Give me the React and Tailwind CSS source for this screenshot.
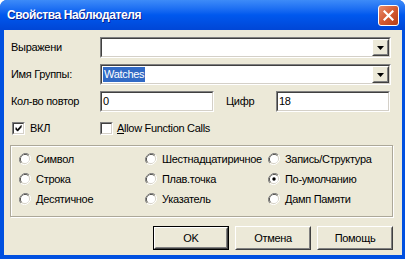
import React from 'react';

const font = { fontFamily: '"Liberation Sans", Arial, sans-serif' };

const Sunken = ({ className = '', children }) => (
  <div className={`border border-t-[#808080] border-l-[#808080] border-b-white border-r-white ${className}`}>
    <div className="h-full w-full border border-t-[#404040] border-l-[#404040] border-b-[#D4D0C8] border-r-[#D4D0C8] bg-white flex items-center">
      {children}
    </div>
  </div>
);

const Raised = ({ className = '', children }) => (
  <div className={`border border-t-white border-l-white border-b-[#404040] border-r-[#404040] ${className}`}>
    <div className="h-full w-full border border-t-[#ECE9D8] border-l-[#ECE9D8] border-b-[#808080] border-r-[#808080] bg-[#ECE9D8] flex items-center justify-center">
      {children}
    </div>
  </div>
);

const DropArrow = () => (
  <Raised className="w-[17px] h-[17px] shrink-0">
    <svg width="7" height="4" viewBox="0 0 7 4">
      <path d="M0 0h7L3.5 4z" fill="#000" />
    </svg>
  </Raised>
);

const Combo = ({ children }) => (
  <Sunken className="w-[291px] h-[21px]">
    <div className="flex-1 flex items-center pl-[1px]">{children}</div>
    <DropArrow />
  </Sunken>
);

const Check = ({ checked }) => (
  <Sunken className="w-[13px] h-[13px] shrink-0">
    {checked && (
      <svg width="9" height="9" viewBox="0 0 9 9" className="ml-[1px]">
        <path d="M1 3.5l2 2 4-4.5v2l-4 4.5-2-2z" fill="#000" stroke="#000" strokeWidth="0.8" />
      </svg>
    )}
  </Sunken>
);

const Radio = ({ checked }) => (
  <svg width="12" height="12" viewBox="0 0 12 12" className="shrink-0">
    <path d="M10.2 1.8A6 6 0 0 0 1.8 10.2" fill="none" stroke="#808080" strokeWidth="1" />
    <path d="M9.5 2.5A5 5 0 0 0 2.5 9.5" fill="none" stroke="#404040" strokeWidth="1" />
    <path d="M1.8 10.2A6 6 0 0 0 10.2 1.8" fill="none" stroke="#ffffff" strokeWidth="1" />
    <path d="M2.5 9.5A5 5 0 0 0 9.5 2.5" fill="none" stroke="#D4D0C8" strokeWidth="1" />
    <circle cx="6" cy="6" r="4" fill="#fff" />
    {checked && <circle cx="6" cy="6" r="1.7" fill="#000" />}
  </svg>
);

const radios = [
  ['Символ', 'Шестнадцатиричное', 'Запись/Структура'],
  ['Строка', 'Плав.точка', 'По-умолчанию'],
  ['Десятичное', 'Указатель', 'Дамп Памяти'],
];

export default function App() {
  return (
    <div className="w-[405px] h-[259px] flex flex-col bg-[#0050E0] rounded-t-[7px] overflow-hidden text-black" style={font}>
      <div className="h-[30px] shrink-0 flex items-center justify-between pl-[7px] pr-[6px] bg-gradient-to-b from-[#3D8BF8] via-[#0058EE] to-[#0046D6]">
        <span className="text-white font-bold text-[12px] tracking-[-0.4px] [text-shadow:1px_1px_0_#0A1E8C]">
          Свойства Наблюдателя
        </span>
        <div className="w-[21px] h-[21px] rounded-[3px] border border-white bg-gradient-to-br from-[#E88B6B] via-[#D45A31] to-[#B73D14] flex items-center justify-center">
          <svg width="11" height="11" viewBox="0 0 11 11">
            <path d="M1.5 1.5l8 8M9.5 1.5l-8 8" stroke="#fff" strokeWidth="2.2" strokeLinecap="square" />
          </svg>
        </div>
      </div>

      <div className="flex-1 ml-[4px] mr-[3px] mb-[4px] bg-[#ECE9D8] flex flex-col text-[11px] tracking-[-0.3px]">
        <div className="flex items-center mt-[7px] pl-[7px]">
          <span className="w-[89px]">Выражени</span>
          <Combo />
        </div>
        <div className="flex items-center mt-[6px] pl-[7px]">
          <span className="w-[89px]">Имя Группы:</span>
          <Combo>
            <span className="bg-[#316AC5] text-white px-[1px] leading-[15px]">Watches</span>
          </Combo>
        </div>
        <div className="flex items-center mt-[6px] pl-[7px]">
          <span className="w-[89px]">
            <span className="block w-[69px] overflow-hidden whitespace-nowrap">Кол-во повтор</span>
          </span>
          <Sunken className="w-[114px] h-[21px]">
            <span className="pl-[1px]">0</span>
          </Sunken>
          <span className="ml-[12px] w-[50px]">Цифр</span>
          <Sunken className="w-[114px] h-[21px]">
            <span className="pl-[1px]">18</span>
          </Sunken>
        </div>
        <div className="flex items-center mt-[10px] pl-[8px] h-[13px]">
          <Check checked />
          <span className="ml-[5px] w-[70px]">ВКЛ</span>
          <Check />
          <span className="ml-[4px]">
            <span className="underline">A</span>llow Function Calls
          </span>
        </div>

        <div className="mt-[10px] ml-[6px] w-[383px] h-[72px] border border-[#ACA899] shadow-[inset_1px_1px_0_#fff,1px_1px_0_#fff] flex flex-col gap-[8px] pt-[7px] pl-[8px]">
          {radios.map((row, i) => (
            <div key={i} className="flex items-center h-[12px]">
              {row.map((label, j) => (
                <div key={label} className={`flex items-center ${j === 0 ? 'w-[126px]' : j === 1 ? 'w-[123px]' : ''}`}>
                  <Radio checked={label === 'По-умолчанию'} />
                  <span className="ml-[5px] whitespace-nowrap">{label}</span>
                </div>
              ))}
            </div>
          ))}
        </div>

        <div className="flex justify-end gap-[6px] mt-[9px] pr-[9px]">
          <div className="border border-black">
            <Raised className="w-[74px] h-[22px]">OK</Raised>
          </div>
          <Raised className="w-[76px] h-[24px]">Отмена</Raised>
          <Raised className="w-[76px] h-[24px]">Помощь</Raised>
        </div>
      </div>
    </div>
  );
}
